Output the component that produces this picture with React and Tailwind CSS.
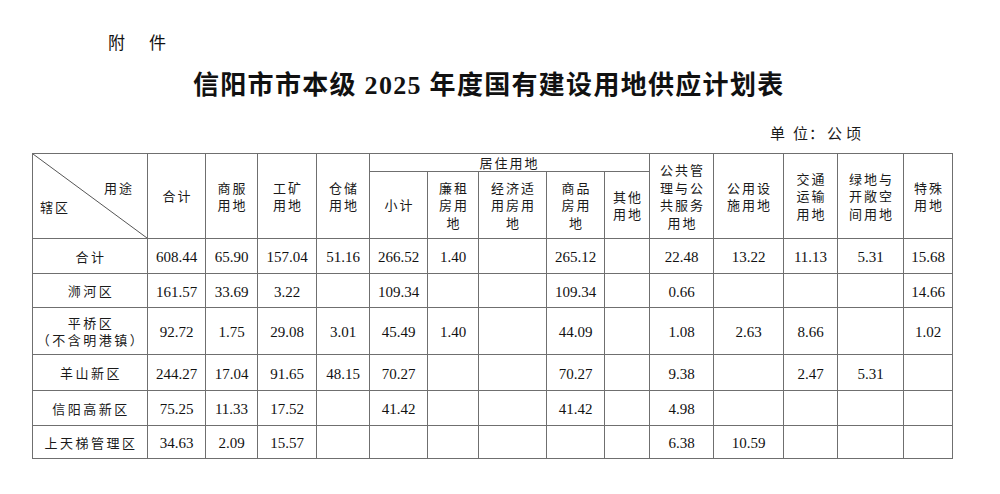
import React from "react";

const cjk = { fontFamily: '"Noto Sans CJK SC", sans-serif' };

const headCols = [
  ["合计"],
  ["商服", "用地"],
  ["工矿", "用地"],
  ["仓储", "用地"],
];
const subCols = [
  ["小计"],
  ["廉租", "房用", "地"],
  ["经济适", "用房用", "地"],
  ["商品", "房用", "地"],
  ["其他", "用地"],
];
const tailCols = [
  ["公共管", "理与公", "共服务", "用地"],
  ["公用设", "施用地"],
  ["交通", "运输", "用地"],
  ["绿地与", "开敞空", "间用地"],
  ["特殊", "用地"],
];

const rows = [
  { label: ["合计"], h: "h-[35px]", v: ["608.44", "65.90", "157.04", "51.16", "266.52", "1.40", "", "265.12", "", "22.48", "13.22", "11.13", "5.31", "15.68"] },
  { label: ["浉河区"], h: "h-[34px]", v: ["161.57", "33.69", "3.22", "", "109.34", "", "", "109.34", "", "0.66", "", "", "", "14.66"] },
  { label: ["平桥区", "（不含明港镇）"], h: "h-[47px]", v: ["92.72", "1.75", "29.08", "3.01", "45.49", "1.40", "", "44.09", "", "1.08", "2.63", "8.66", "", "1.02"] },
  { label: ["羊山新区"], h: "h-[36px]", v: ["244.27", "17.04", "91.65", "48.15", "70.27", "", "", "70.27", "", "9.38", "", "2.47", "5.31", ""] },
  { label: ["信阳高新区"], h: "h-[35px]", v: ["75.25", "11.33", "17.52", "", "41.42", "", "", "41.42", "", "4.98", "", "", "", ""] },
  { label: ["上天梯管理区"], h: "h-[33px]", v: ["34.63", "2.09", "15.57", "", "", "", "", "", "", "6.38", "10.59", "", "", ""] },
];

const widths = ["w-[115px]", "w-[58px]", "w-[52px]", "w-[59px]", "w-[53px]", "w-[58px]", "w-[51px]", "w-[68px]", "w-[58px]", "w-[45px]", "w-[64px]", "w-[70px]", "w-[54px]", "w-[66px]", "w-[49px]"];

const cell = "border border-[#6f6f6f] p-0 text-center align-middle";

function Lines({ lines }) {
  return (
    <div className="text-[13px] leading-[17.5px] tracking-[2px] text-[#1a1a1a] pl-[2px]" style={cjk}>
      {lines.map((l, i) => (
        <div key={i}>{l}</div>
      ))}
    </div>
  );
}

export default function App() {
  return (
    <div className="w-[1000px] h-[494px] bg-white overflow-hidden text-[#111]">
      <div className="pt-[30px] pl-[108px] text-[17px] leading-[24px] flex" style={cjk}>
        <span>附</span>
        <span className="ml-[24px]">件</span>
      </div>
      <div
        className="mt-[16px] pl-[193px] text-[26px] leading-[32px] font-bold tracking-[1.3px]"
        style={{ fontFamily: '"Liberation Serif", "Noto Sans CJK SC", serif' }}
      >
        信阳市市本级 2025 年度国有建设用地供应计划表
      </div>
      <div className="mt-[21px] pl-[770px] text-[15px] leading-[20px] flex text-[#1a1a1a]" style={cjk}>
        <span className="w-[23px]">单</span>
        <span className="w-[16px]">位</span>
        <span className="w-[18px]">：</span>
        <span className="w-[19px]">公</span>
        <span>顷</span>
      </div>
      <table className="mt-[10px] ml-[32px] w-[920px] table-fixed border-collapse">
        <colgroup>
          {widths.map((w, i) => (
            <col key={i} className={w} />
          ))}
        </colgroup>
        <tbody>
          <tr className="h-[18px]">
            <td rowSpan={2} className={`${cell} relative align-top`}>
              <svg className="absolute inset-0 w-full h-full" viewBox="0 0 100 100" preserveAspectRatio="none">
                <line x1="0" y1="0" x2="100" y2="100" stroke="#555" strokeWidth="1" vectorEffect="non-scaling-stroke" />
              </svg>
              <div className="relative text-[13px] leading-[17px] tracking-[2px] text-[#1a1a1a]" style={cjk}>
                <div className="pt-[25px] text-right pr-[13px]">用途</div>
                <div className="mt-[2px] text-left pl-[7px]">辖区</div>
              </div>
            </td>
            {headCols.map((c, i) => (
              <td key={i} rowSpan={2} className={cell}>
                <Lines lines={c} />
              </td>
            ))}
            <td colSpan={5} className={cell}>
              <div className="text-[13px] leading-[17px] tracking-[2px] text-[#1a1a1a]" style={cjk}>居住用地</div>
            </td>
            {tailCols.map((c, i) => (
              <td key={i} rowSpan={2} className={cell}>
                <Lines lines={c} />
              </td>
            ))}
          </tr>
          <tr className="h-[67px]">
            {subCols.map((c, i) => (
              <td key={i} className={cell}>
                <Lines lines={c} />
              </td>
            ))}
          </tr>
          {rows.map((r, ri) => (
            <tr key={ri} className={r.h}>
              <td className={cell}>
                <div className="text-[13px] leading-[17px] tracking-[2.5px] text-[#1a1a1a] pl-[2px]" style={cjk}>
                  {r.label.map((l, i) => (
                    <div key={i}>{l}</div>
                  ))}
                </div>
              </td>
              {r.v.map((v, vi) => (
                <td key={vi} className={cell}>
                  <span className="text-[15px] leading-[18px]" style={{ fontFamily: '"Liberation Serif", serif' }}>
                    {v}
                  </span>
                </td>
              ))}
            </tr>
          ))}
        </tbody>
      </table>
    </div>
  );
}
